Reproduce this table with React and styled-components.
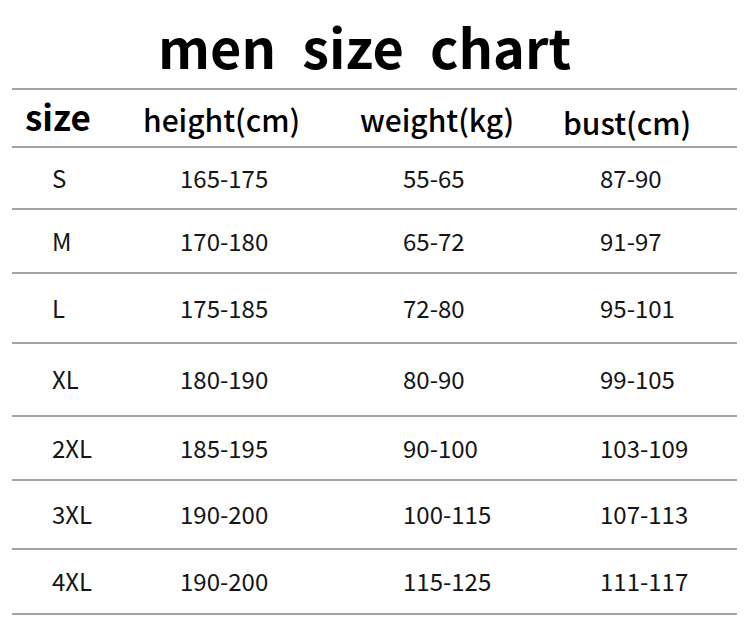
import React from 'react'
import styled, { createGlobalStyle } from 'styled-components'

const GlobalStyle = createGlobalStyle`
  html, body {
    margin: 0;
    padding: 0;
    background: #ffffff;
  }
  body {
    font-family: "Noto Sans CJK SC", "Noto Sans", sans-serif;
    color: #111;
  }
`

const Page = styled.div`
  width: 750px;
  height: 632px;
  background: #ffffff;
  overflow: hidden;
`

const Title = styled.h1`
  margin: 0;
  padding: 19px 0 15px 158px;
  height: 54px;
  font-size: 54px;
  line-height: 54px;
  font-weight: 700;
  word-spacing: 14px;
  color: #000;
  white-space: nowrap;
`

const Table = styled.div`
  margin-left: 12px;
  width: 725px;
  border-top: 2px solid #a3a3a3;
`

// four columns, text placed from each column's left edge
const Row = styled.div`
  display: grid;
  grid-template-columns: 128px 210px 205px 182px;
  align-items: center;
  height: ${({ h }) => h}px;
  border-bottom: 2px solid #a3a3a3;
  box-sizing: border-box;
`

const HeadCell = styled.div`
  padding-left: ${({ indent }) => indent}px;
  font-size: ${({ big }) => (big ? 35 : 30)}px;
  font-weight: ${({ big }) => (big ? 700 : 500)};
  color: #000;
  white-space: nowrap;
  transform: translateY(${({ dy }) => dy || 0}px);
`

const Cell = styled.div`
  padding-left: ${({ indent }) => indent}px;
  font-size: 24px;
  font-weight: 400;
  color: #151515;
  white-space: nowrap;
  transform: translateY(-1px);
`

const head = [
  { text: 'size', indent: 13, big: true, dy: -3 },
  { text: 'height(cm)', indent: 3, dy: 1 },
  { text: 'weight(kg)', indent: 10, dy: 1 },
  { text: 'bust(cm)', indent: 8, dy: 4 },
]

const indents = [40, 40, 53, 45]

const rows = [
  { h: 62, cells: ['S', '165-175', '55-65', '87-90'] },
  { h: 64, cells: ['M', '170-180', '65-72', '91-97'] },
  { h: 70, cells: ['L', '175-185', '72-80', '95-101'] },
  { h: 73, cells: ['XL', '180-190', '80-90', '99-105'] },
  { h: 64, cells: ['2XL', '185-195', '90-100', '103-109'] },
  { h: 69, cells: ['3XL', '190-200', '100-115', '107-113'] },
  { h: 65, cells: ['4XL', '190-200', '115-125', '111-117'] },
]

export default function App() {
  return (
    <Page>
      <GlobalStyle />
      <Title>men size chart</Title>
      <Table>
        <Row h={58}>
          {head.map(c => (
            <HeadCell key={c.text} indent={c.indent} big={c.big} dy={c.dy}>
              {c.text}
            </HeadCell>
          ))}
        </Row>
        {rows.map(r => (
          <Row key={r.cells[0]} h={r.h}>
            {r.cells.map((c, i) => (
              <Cell key={i} indent={indents[i]}>
                {c}
              </Cell>
            ))}
          </Row>
        ))}
      </Table>
    </Page>
  )
}
